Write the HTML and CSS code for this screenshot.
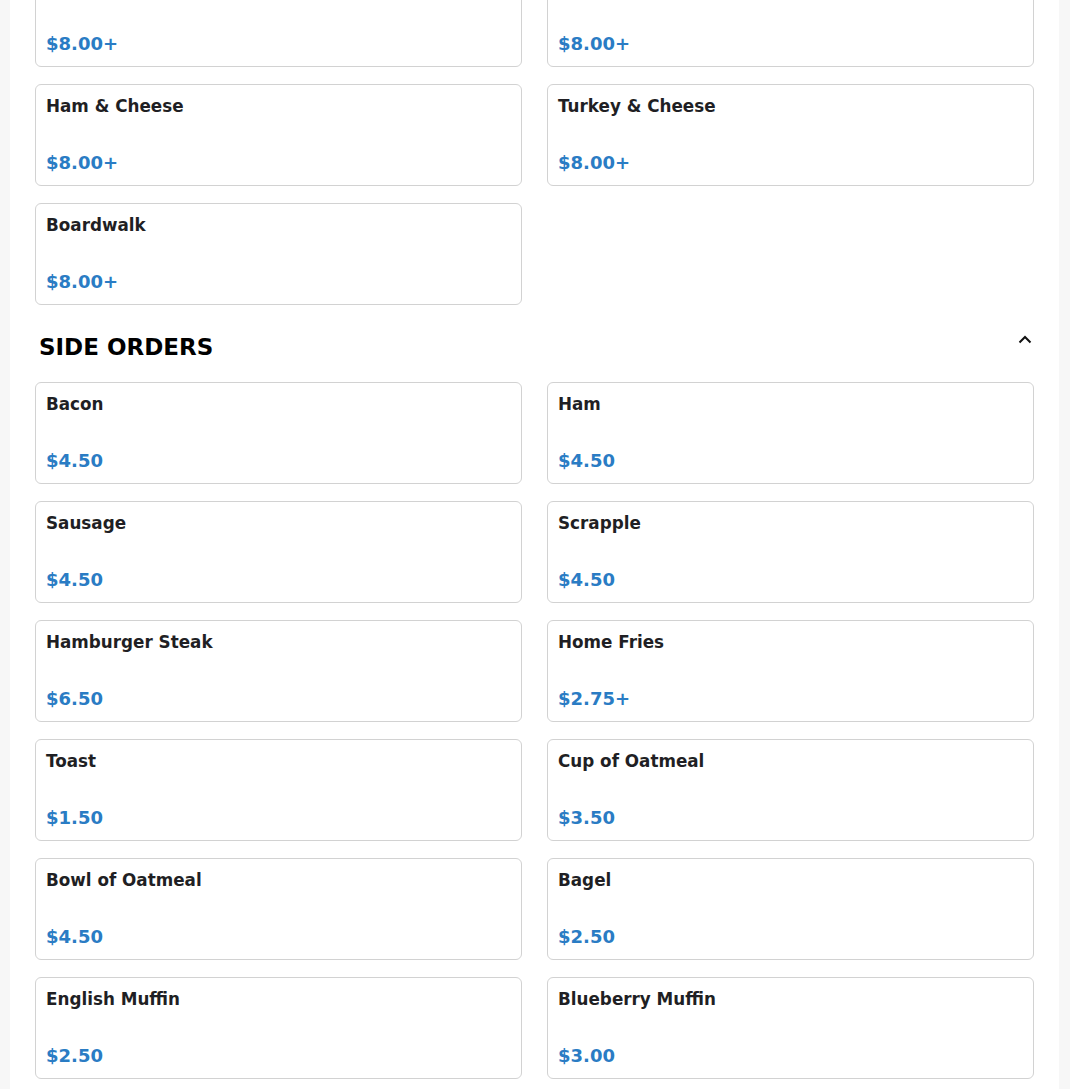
FILE: index.html
```html
<!DOCTYPE html>
<html lang="en">
<head>
<meta charset="utf-8">
<title>Menu</title>
<link rel="stylesheet" href="styles.css">
</head>
<body>
<main class="page">
  <section class="section section-first">
    <div class="grid">
      <div class="card"><div class="name">&nbsp;</div><div class="price">$8.00+</div></div>
      <div class="card"><div class="name">&nbsp;</div><div class="price">$8.00+</div></div>
      <div class="card"><div class="name">Ham &amp; Cheese</div><div class="price">$8.00+</div></div>
      <div class="card"><div class="name">Turkey &amp; Cheese</div><div class="price">$8.00+</div></div>
      <div class="card"><div class="name">Boardwalk</div><div class="price">$8.00+</div></div>
    </div>
  </section>
  <section class="section">
    <div class="section-header">
      <h2 class="section-title">SIDE ORDERS</h2>
      <svg class="chevron" width="14" height="9" viewBox="0 0 14 9" aria-hidden="true"><path d="M1.5 7.5 L7 2 L12.5 7.5" fill="none" stroke="#111" stroke-width="2"/></svg>
    </div>
    <div class="grid">
      <div class="card"><div class="name">Bacon</div><div class="price">$4.50</div></div>
      <div class="card"><div class="name">Ham</div><div class="price">$4.50</div></div>
      <div class="card"><div class="name">Sausage</div><div class="price">$4.50</div></div>
      <div class="card"><div class="name">Scrapple</div><div class="price">$4.50</div></div>
      <div class="card"><div class="name">Hamburger Steak</div><div class="price">$6.50</div></div>
      <div class="card"><div class="name">Home Fries</div><div class="price">$2.75+</div></div>
      <div class="card"><div class="name">Toast</div><div class="price">$1.50</div></div>
      <div class="card"><div class="name">Cup of Oatmeal</div><div class="price">$3.50</div></div>
      <div class="card"><div class="name">Bowl of Oatmeal</div><div class="price">$4.50</div></div>
      <div class="card"><div class="name">Bagel</div><div class="price">$2.50</div></div>
      <div class="card"><div class="name">English Muffin</div><div class="price">$2.50</div></div>
      <div class="card"><div class="name">Blueberry Muffin</div><div class="price">$3.00</div></div>
    </div>
  </section>
</main>
</body>
</html>
```

FILE: styles.css
```css
html, body {
  margin: 0;
  padding: 0;
}
body {
  background: #f7f7f7;
  font-family: "DejaVu Sans", sans-serif;
  color: #1d1d1f;
}
.page {
  background: #ffffff;
  margin: -35px 11px 0 10px;
  padding: 0 25px 40px 25px;
}
.grid {
  display: grid;
  grid-template-columns: 1fr 1fr;
  column-gap: 25px;
  row-gap: 17px;
}
.card {
  box-sizing: border-box;
  height: 102px;
  border: 1px solid #d2d2d2;
  border-radius: 6px;
  padding: 11px 10px 12px 10px;
  background: #fff;
}
.name {
  font-weight: bold;
  font-size: 16.8px;
  line-height: 20px;
  color: #1f1f24;
  white-space: nowrap;
}
.price {
  margin-top: 36px;
  font-weight: bold;
  font-size: 18px;
  line-height: 21px;
  color: #2a7cc4;
}
.section-header {
  display: flex;
  justify-content: space-between;
  align-items: flex-start;
  padding: 29px 2px 21px 4px;
}
.section-title {
  margin: 0;
  font-size: 23px;
  line-height: 27px;
  font-weight: bold;
  color: #000;
}
.chevron {
  display: block;
  margin-top: 1px;
}
```
